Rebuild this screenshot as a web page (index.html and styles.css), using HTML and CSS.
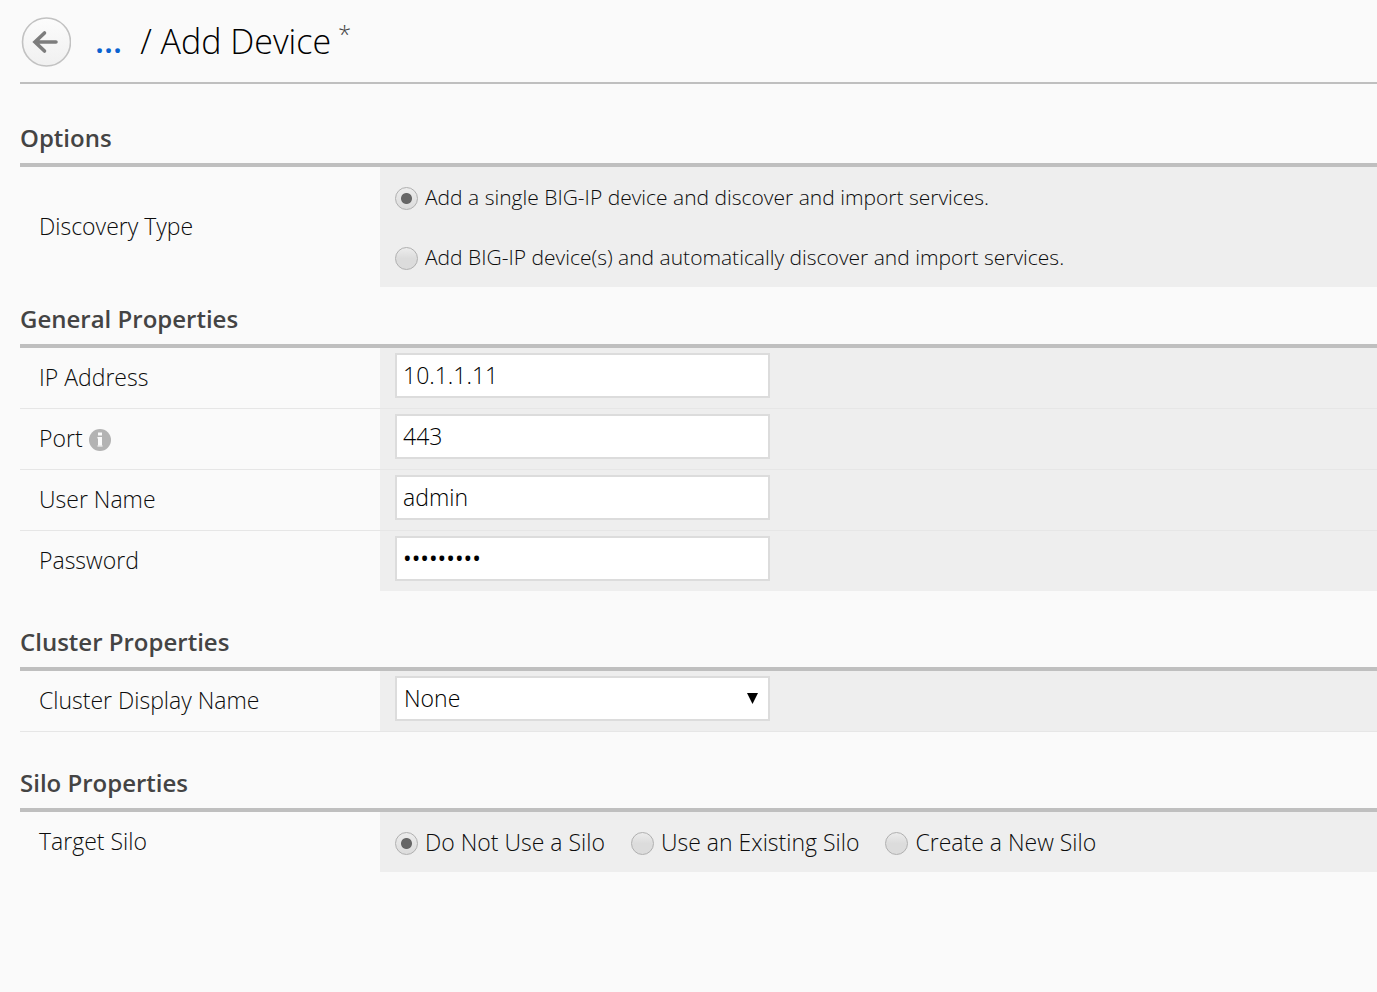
FILE: index.html
```html
<!DOCTYPE html>
<html lang="en">
<head>
<meta charset="utf-8">
<title>Add Device</title>
<link rel="stylesheet" href="styles.css">
</head>
<body>
<header class="page-header">
  <button class="back" type="button" aria-label="Back">
    <svg viewBox="0 0 50 50" aria-hidden="true">
      <defs><linearGradient id="back-fill" x1="0" y1="0" x2="0" y2="1"><stop offset="0" stop-color="#fcfcfc"/><stop offset="1" stop-color="#f0f0f0"/></linearGradient></defs>
      <circle cx="25.500" cy="25" r="24" fill="url(#back-fill)" stroke="#c2c2c2" stroke-width="1.600"/>
      <path d="M35 25H14.500M23.500 16L14 25L23.500 34" fill="none" stroke="#7d7d7d" stroke-width="3.600" stroke-linecap="round" stroke-linejoin="miter"/>
    </svg>
  </button>
  <a class="crumb" href="#">...</a>
  <h1 class="title">/ Add Device</h1>
  <span class="unsaved">*</span>
</header>
<form class="form">
  <section class="section section-options">
    <h2 class="heading">Options</h2>
    <div class="row">
      <div class="label" id="discovery">Discovery Type</div>
      <div class="value stacked" role="radiogroup" aria-labelledby="discovery">
        <label class="choice"><input class="radio" type="radio" name="discovery" checked>Add a single BIG-IP device and discover and import services.</label>
        <label class="choice"><input class="radio" type="radio" name="discovery">Add BIG-IP device(s) and automatically discover and import services.</label>
      </div>
    </div>
  </section>
  <section class="section section-general">
    <h2 class="heading">General Properties</h2>
    <div class="row">
      <label class="label" for="ip">IP Address</label>
      <div class="value"><input class="field" id="ip" type="text" value="10.1.1.11"></div>
    </div>
    <div class="row">
      <label class="label" for="port">Port
        <svg class="info" viewBox="0 0 22 22" aria-hidden="true"><circle cx="11" cy="11" r="11" fill="#b3b3b3"/><path d="M9 3.500h4v3H9zM9 8h4v9.500H9z" fill="#fafafa"/><path d="M8 8h1v1.500H8zM8 16.500h6v1H8z" fill="#dedede"/></svg>
      </label>
      <div class="value"><input class="field" id="port" type="text" value="443"></div>
    </div>
    <div class="row">
      <label class="label" for="user">User Name</label>
      <div class="value"><input class="field" id="user" type="text" value="admin"></div>
    </div>
    <div class="row">
      <label class="label" for="password">Password</label>
      <div class="value"><input class="field password" id="password" type="password" value="admin1234"></div>
    </div>
  </section>
  <section class="section">
    <h2 class="heading">Cluster Properties</h2>
    <div class="row ruled">
      <label class="label" for="cluster">Cluster Display Name</label>
      <div class="value">
        <div class="picker">
          <select class="field select" id="cluster"><option>None</option></select>
          <svg class="caret" viewBox="0 0 12 11" aria-hidden="true"><path d="M0 0h11L5.500 11z" fill="#000"/></svg>
        </div>
      </div>
    </div>
  </section>
  <section class="section">
    <h2 class="heading">Silo Properties</h2>
    <div class="row">
      <div class="label" id="silo">Target Silo</div>
      <div class="value inline" role="radiogroup" aria-labelledby="silo">
        <label class="choice"><input class="radio" type="radio" name="silo" checked>Do Not Use a Silo</label>
        <label class="choice"><input class="radio" type="radio" name="silo">Use an Existing Silo</label>
        <label class="choice"><input class="radio" type="radio" name="silo">Create a New Silo</label>
      </div>
    </div>
  </section>
</form>
</body>
</html>
```
FILE: styles.css
```css
* { box-sizing: border-box; }

body {
  margin: 0;
  padding-left: 20px;
  background: #fafafa;
  color: #0c0c0c;
  font: 300 23px/30px "Open Sans", "Noto Sans", sans-serif;
}

.page-header {
  display: flex;
  align-items: center;
  min-height: 84px;
  padding-top: 1px;
  border-bottom: 2px solid #bfbfbf;
}

.back {
  width: 50px;
  height: 50px;
  margin: 0 24px 0 1px;
  padding: 0;
  border: 0;
  background: none;
}

.back svg { display: block; }

.crumb {
  margin-right: 18px;
  padding-bottom: 2px;
  color: #0a62d0;
  font-size: 33px;
  font-weight: 600;
  text-decoration: none;
}

.title {
  margin: 0;
  padding-bottom: 2px;
  color: #000;
  font-size: 34px;
  font-weight: 300;
}

.unsaved {
  align-self: flex-start;
  margin: 18px 0 0 7px;
  color: #444;
  font-size: 24px;
}

.section { padding-top: 19px; }
.section-options { padding-top: 22px; }
.section-general { padding-top: 0; }

.heading {
  margin: 0;
  padding: 17px 0 10px;
  border-bottom: 4px solid #bfbfbf;
  color: #444;
  font-size: 24px;
  font-weight: 600;
}

.row {
  display: grid;
  grid-template-columns: 360px 1fr;
  box-sizing: content-box;
  min-height: 60px;
}

.row + .row { border-top: 1px solid #e6e6e6; }
.ruled { border-bottom: 1px solid #e6e6e6; }

.label {
  display: flex;
  align-items: center;
  gap: 6px;
  padding: 0 0 2px 19px;
}

.value {
  padding: 5px 15px;
  background: #eee;
}

.stacked {
  padding: 0 15px;
  font-size: 21px;
}

.inline {
  display: flex;
  gap: 26px;
  padding: 0 15px;
}

.choice {
  display: flex;
  align-items: center;
  gap: 7px;
  min-height: 60px;
}

.radio {
  appearance: none;
  flex: none;
  width: 23px;
  height: 23px;
  margin: 3px 0 0;
  border: 1px solid #b0b0b0;
  border-radius: 50%;
  background: linear-gradient(#ececec, #dcdcdc 50%);
}

.radio:checked {
  background: radial-gradient(circle, #666 5px, transparent 6px), linear-gradient(#ececec, #dcdcdc);
}

.info {
  width: 22px;
  height: 22px;
  margin-top: 3px;
}

.field {
  display: block;
  width: 375px;
  max-width: 100%;
  height: 45px;
  padding: 0 6px 2px;
  border: 2px solid #dcdcdc;
  border-radius: 0;
  background: #fff;
  color: #000;
  font: inherit;
}

.password { font-weight: 400; }

.picker {
  position: relative;
  width: 375px;
  max-width: 100%;
}

.select {
  appearance: none;
  padding-left: 7px;
}

.caret {
  position: absolute;
  top: 17px;
  right: 11px;
  width: 12px;
  height: 11px;
  pointer-events: none;
}
```
